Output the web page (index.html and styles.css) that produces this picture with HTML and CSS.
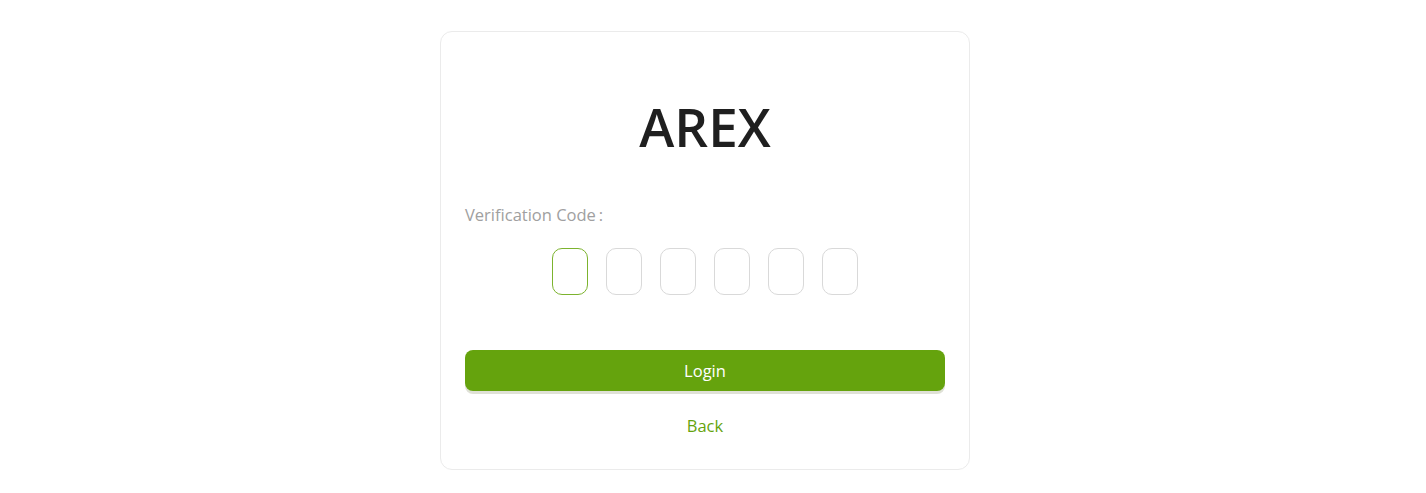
FILE: index.html
```html
<!DOCTYPE html>
<html lang="en">
<head>
<meta charset="utf-8">
<title>AREX Login</title>
<link rel="stylesheet" href="styles.css">
</head>
<body>
<main class="page">
  <section class="card">
    <h1 class="title">AREX</h1>
    <div class="label">Verification Code<span class="colon">:</span></div>
    <div class="code">
      <input class="cell cell-active" type="text" maxlength="1">
      <input class="cell" type="text" maxlength="1">
      <input class="cell" type="text" maxlength="1">
      <input class="cell" type="text" maxlength="1">
      <input class="cell" type="text" maxlength="1">
      <input class="cell" type="text" maxlength="1">
    </div>
    <button class="login" type="button">Login</button>
    <a class="back" href="#">Back</a>
  </section>
</main>
</body>
</html>
```

FILE: styles.css
```css
* { box-sizing: border-box; }
html, body { margin: 0; padding: 0; background: #fff; }
body { font-family: "Open Sans", "Noto Sans", sans-serif; color: #222; }
.page {
  display: flex;
  justify-content: center;
  padding-top: 31px;
  padding-right: 16px;
}
.card {
  width: 530px;
  height: 439px;
  border: 1px solid #ebebeb;
  border-radius: 12px;
  padding: 0 24px;
  display: flex;
  flex-direction: column;
}
.title {
  margin: 57px 0 0;
  text-align: center;
  font-size: 53px;
  font-weight: 600;
  line-height: 76px;
  color: #1f1f1f;
  letter-spacing: 0;
}
.label {
  margin-top: 38px;
  font-size: 16.5px;
  line-height: 24px;
  color: #a0a0a0;
}
.colon { margin-left: 3px; }
.code {
  margin-top: 21px;
  display: flex;
  justify-content: center;
  gap: 18px;
}
.cell {
  width: 36px;
  height: 47px;
  border: 1px solid #d9d9d9;
  border-radius: 10px;
  outline: none;
  background: #fff;
  padding: 0;
  text-align: center;
  font: inherit;
}
.cell-active { border-color: #7cb32e; }
.login {
  margin-top: 55px;
  height: 41px;
  width: 100%;
  border: none;
  border-radius: 8px;
  background: #65a30d;
  color: #fff;
  font-family: inherit;
  font-size: 16.5px;
  box-shadow: 0 3px 0 rgba(80, 90, 30, 0.18);
  cursor: pointer;
}
.back {
  margin-top: 23px;
  align-self: center;
  color: #65a30d;
  font-size: 16.5px;
  line-height: 24px;
  text-decoration: none;
}
```
